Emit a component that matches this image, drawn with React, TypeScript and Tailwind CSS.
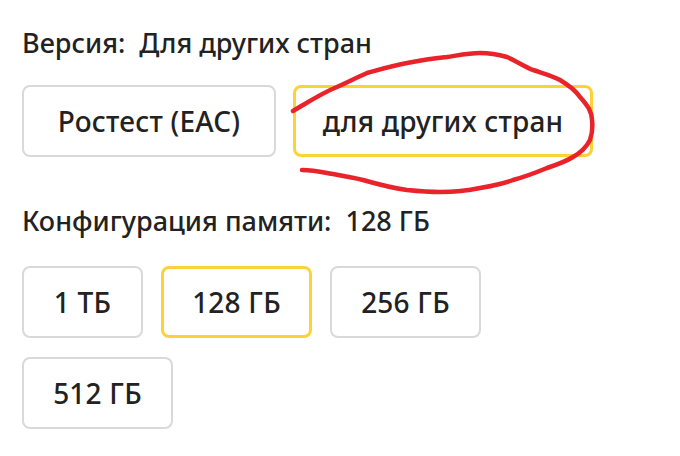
import React from "react";

type Opt = { label: string; width: string; selected?: boolean };

const versions: Opt[] = [
  { label: "Ростест (EAC)", width: "w-[254px]" },
  { label: "для других стран", width: "w-[300px]", selected: true },
];

const memory: Opt[] = [
  { label: "1 ТБ", width: "w-[121px]" },
  { label: "128 ГБ", width: "w-[151px]", selected: true },
  { label: "256 ГБ", width: "w-[151px]" },
  { label: "512 ГБ", width: "w-[151px]" },
];

function Chip({ label, width, selected }: Opt) {
  const base =
    "h-[72px] inline-flex items-center justify-center rounded-[8px] bg-white text-[28px] font-medium tracking-[0.2px] text-[#222] whitespace-nowrap";
  return (
    <button
      type="button"
      className={`${base} ${width} ${
        selected ? "border-[3px] border-[#fdd236]" : "border-2 border-[#d9d9d9]"
      }`}
    >
      {label}
    </button>
  );
}

export default function App() {
  return (
    <div
      className="relative w-[680px] h-[456px] overflow-hidden bg-white pl-[22px] pt-[27px] text-[#222]"
      style={{ fontFamily: '"Noto Sans", "Open Sans", sans-serif' }}
    >
      {/* Версия */}
      <div className="text-[27px] leading-[32px] font-medium">
        Версия:&nbsp; Для других стран
      </div>
      <div className="mt-[26px] flex gap-[17px]">
        {versions.map((v) => (
          <Chip key={v.label} {...v} />
        ))}
      </div>

      {/* Память */}
      <div className="mt-[48px] text-[27px] leading-[32px] font-medium">
        Конфигурация памяти:&nbsp; 128 ГБ
      </div>
      <div className="mt-[29px] flex w-[500px] flex-wrap gap-x-[18px] gap-y-[19px]">
        {memory.map((m) => (
          <Chip key={m.label} {...m} />
        ))}
      </div>

      {/* hand-drawn red circle */}
      <svg
        className="pointer-events-none absolute left-0 top-0"
        width="680"
        height="456"
        viewBox="0 0 680 456"
        fill="none"
      >
        <path
          d="M293 111 C310 101 322 93 337 87 C352 80 360 76 367 73 C385 68 395 65 407 63 C422 60 435 58 447 57 C460 55 470 53 480 53 C492 53 500 55 507 57 C518 62 525 67 533 70 C545 74 553 76 560 80 C570 86 576 91 580 97 C588 106 592 112 592 120 C593 128 592 134 590 140 C586 148 580 153 573 157 C565 162 556 165 547 168 C535 173 524 177 513 180 C502 184 491 186 480 188 C466 191 453 192 440 192 C428 192 417 191 407 190 C392 188 377 184 363 180 C350 177 338 175 327 173 C317 171 309 170 302 170"
          stroke="#e8232a"
          strokeWidth="4.5"
          strokeLinecap="round"
          strokeLinejoin="round"
        />
      </svg>
    </div>
  );
}
